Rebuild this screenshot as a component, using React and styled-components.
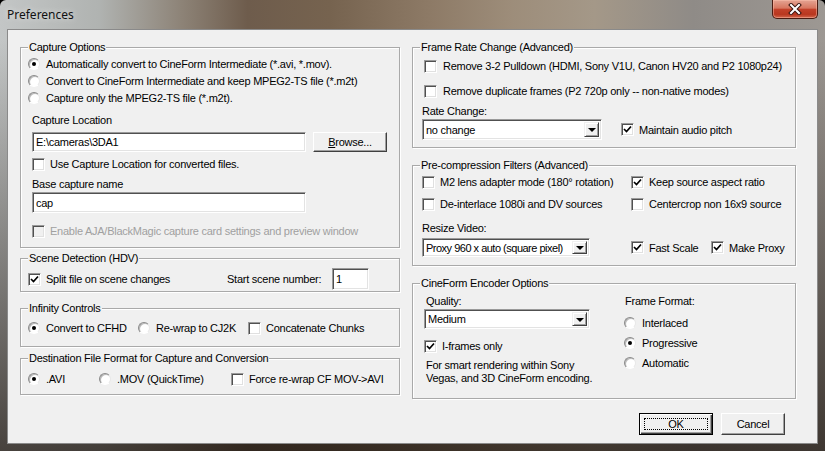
import styled, { createGlobalStyle } from "styled-components";

const GlobalStyle = createGlobalStyle`
  body {
    margin: 0;
    background: #000;
    font-family: "Liberation Sans", Arial, sans-serif;
    font-size: 11px;
    letter-spacing: -0.25px;
    color: #000;
  }
`;

const Window = styled.div`
  width: 825px;
  height: 451px;
  display: flex;
  flex-direction: column;
  box-sizing: border-box;
  border-radius: 6px 6px 0 0;
  overflow: hidden;
  background:
    linear-gradient(to bottom, rgba(0, 0, 0, 0) 0px, rgba(0, 0, 0, 0) 40px, rgba(30, 22, 16, 0.75) 100%),
    linear-gradient(to right, #c3c6c6 0%, #b0b3b1 12%, #8d8377 22%, #6e5c4c 30%, #76634f 40%, #8d7a66 52%, #9d8d7a 62%, #a49888 72%, #8f8b87 84%, #9d9893 100%);
`;

const TitleBar = styled.div`
  height: 29px;
  display: flex;
  align-items: flex-start;
  justify-content: space-between;
  padding: 0 7px 0 7px;
  flex-shrink: 0;
`;

const Title = styled.div`
  font-family: "Noto Sans", "Liberation Sans", sans-serif;
  font-size: 12px;
  letter-spacing: 0;
  line-height: 30px;
  color: #111;
  text-shadow: 0 0 6px rgba(255, 255, 255, 0.7);
`;

const CloseButton = styled.div`
  width: 46px;
  height: 19px;
  box-sizing: border-box;
  border: 1px solid #4a1c12;
  border-top: none;
  border-radius: 0 0 5px 5px;
  background: linear-gradient(to bottom, #e4a493 0%, #d77760 45%, #c2412a 52%, #b9371f 80%, #d2664c 100%);
  box-shadow: inset 0 0 0 1px rgba(255, 200, 180, 0.45);
  display: flex;
  align-items: center;
  justify-content: center;
`;

const Client = styled.div`
  flex: 1;
  margin: 0 7px 7px 7px;
  background: #f0f0f0;
  border: 1px solid #8a8a8a;
  display: flex;
  flex-direction: column;
  padding: 17px 21px 0 12px;
`;

const Columns = styled.div`
  display: grid;
  grid-template-columns: 380px 384px;
  column-gap: 12px;
  align-items: start;
`;

const Column = styled.div`
  display: flex;
  flex-direction: column;
`;

const Group = styled.div`
  position: relative;
  box-sizing: border-box;
  height: ${(p) => p.$h}px;
  margin-top: ${(p) => p.$mt || 0}px;
  border: 1px solid #a9a9a9;
  box-shadow: inset 1px 1px 0 #fff, 1px 1px 0 #fff;
  display: flex;
  flex-direction: column;
`;

const Legend = styled.span`
  position: absolute;
  top: -7px;
  left: 7px;
  padding: 0 1px;
  line-height: 13px;
  background: #f0f0f0;
  white-space: nowrap;
`;

const Row = styled.div`
  display: flex;
  align-items: center;
  height: ${(p) => p.$h || 16}px;
  margin-top: ${(p) => p.$mt || 0}px;
  padding-left: ${(p) => p.$pl || 0}px;
  white-space: nowrap;
`;

const GridRow = styled.div`
  display: grid;
  grid-template-columns: ${(p) => p.$cols};
  align-items: center;
  height: ${(p) => p.$h || 16}px;
  margin-top: ${(p) => p.$mt || 0}px;
  padding-left: ${(p) => p.$pl || 0}px;
  white-space: nowrap;
`;

const Option = styled.div`
  display: flex;
  align-items: center;
  gap: ${(p) => p.$gap || 5}px;
  color: ${(p) => (p.$disabled ? "#a0a0a0" : "#000")};
  margin-left: ${(p) => p.$ml || 0}px;
`;

const Box = styled.span`
  width: 13px;
  height: 13px;
  box-sizing: border-box;
  flex-shrink: 0;
  background: ${(p) => (p.$disabled ? "#f0f0f0" : "#fff")};
  border: 1px solid;
  border-color: #9a9a9a #fff #fff #9a9a9a;
  box-shadow: inset 1px 1px 0 #505050, inset -1px -1px 0 #e0e0e0;
  display: flex;
  align-items: center;
  justify-content: center;
`;

const Round = styled.span`
  width: 12px;
  height: 12px;
  box-sizing: border-box;
  flex-shrink: 0;
  border-radius: 50%;
  background: radial-gradient(circle at 60% 60%, #fff 0%, #fff 45%, #e6e6e6 100%);
  border: 1px solid;
  border-color: #8a8a8a #e8e8e8 #ffffff #8a8a8a;
  box-shadow: inset 1px 1px 0 #b8b8b8;
  display: flex;
  align-items: center;
  justify-content: center;
`;

const Dot = styled.span`
  width: 4px;
  height: 4px;
  border-radius: 50%;
  background: #000;
`;

const Label = styled.div`
  line-height: 13px;
  white-space: ${(p) => (p.$wrap ? "normal" : "nowrap")};
`;

const TextBox = styled.div`
  width: ${(p) => p.$w}px;
  height: ${(p) => p.$h || 20}px;
  box-sizing: border-box;
  background: #fff;
  border: 1px solid;
  border-color: #9a9a9a #fff #fff #9a9a9a;
  box-shadow: inset 1px 1px 0 #505050, inset -1px -1px 0 #e3e3e3;
  padding-left: 3px;
  display: flex;
  align-items: center;
  margin-left: ${(p) => p.$ml || 0}px;
  flex-shrink: 0;
  white-space: nowrap;
  overflow: hidden;
`;

const Combo = styled(TextBox)`
  justify-content: space-between;
  gap: 2px;
  padding: 2px 2px 2px 3px;
`;

const ComboText = styled.span`
  flex: 1;
  min-width: 0;
  overflow: hidden;
  letter-spacing: ${(p) => (p.$tight ? "-0.5px" : "inherit")};
`;

const DropButton = styled.span`
  width: 15px;
  height: 100%;
  box-sizing: border-box;
  flex-shrink: 0;
  background: #f0f0f0;
  border: 1px solid;
  border-color: #f0f0f0 #404040 #404040 #f0f0f0;
  box-shadow: inset 1px 1px 0 #fff, inset -1px -1px 0 #a0a0a0;
  display: flex;
  align-items: center;
  justify-content: center;
`;

const Arrow = styled.span`
  width: 0;
  height: 0;
  border-left: 4px solid transparent;
  border-right: 4px solid transparent;
  border-top: 4px solid #000;
  margin-top: 1px;
`;

const Button = styled.div`
  width: ${(p) => p.$w}px;
  height: ${(p) => p.$h || 21}px;
  box-sizing: border-box;
  background: #f0f0f0;
  border: 1px solid;
  border-color: ${(p) => (p.$default ? "#000" : "#fff #404040 #404040 #fff")};
  box-shadow: ${(p) =>
    p.$default
      ? "inset 1px 1px 0 #fff, inset -1px -1px 0 #404040, inset -2px -2px 0 #a0a0a0"
      : "inset -1px -1px 0 #a0a0a0"};
  display: flex;
  align-items: center;
  justify-content: center;
  margin-left: ${(p) => p.$ml || 0}px;
  flex-shrink: 0;
`;

const Focus = styled.span`
  border: 1px dotted #000;
  width: calc(100% - 8px);
  height: calc(100% - 8px);
  display: flex;
  align-items: center;
  justify-content: center;
  box-sizing: border-box;
`;

const SplitGrid = styled.div`
  display: grid;
  grid-template-columns: ${(p) => p.$cols};
  padding-left: ${(p) => p.$pl || 0}px;
`;

const SubColumn = styled.div`
  display: flex;
  flex-direction: column;
`;

const ButtonRow = styled.div`
  display: flex;
  justify-content: flex-end;
  padding-right: 11px;
  margin-top: 14px;
`;

const Check = ({ checked, disabled }) => (
  <Box $disabled={disabled}>
    {checked && (
      <svg width="9" height="9" viewBox="0 0 9 9">
        <path d="M1 4 L3.5 6.5 L8 1.5" fill="none" stroke="#000" strokeWidth="1.7" />
      </svg>
    )}
  </Box>
);

const Radio = ({ checked }) => <Round>{checked && <Dot />}</Round>;

const CheckOption = ({ checked, disabled, children, ml, gap }) => (
  <Option $disabled={disabled} $ml={ml} $gap={gap}>
    <Check checked={checked} disabled={disabled} />
    <span>{children}</span>
  </Option>
);

const RadioOption = ({ checked, children, ml }) => (
  <Option $gap={6} $ml={ml}>
    <Radio checked={checked} />
    <span>{children}</span>
  </Option>
);

const Select = ({ w, h, value, tight }) => (
  <Combo $w={w} $h={h}>
    <ComboText $tight={tight}>{value}</ComboText>
    <DropButton>
      <Arrow />
    </DropButton>
  </Combo>
);

export default function App() {
  return (
    <>
      <GlobalStyle />
      <Window>
        <TitleBar>
          <Title>Preferences</Title>
          <CloseButton>
            <svg width="14" height="12" viewBox="0 0 14 12">
              <path d="M3 2 L11 10 M11 2 L3 10" stroke="#3a1510" strokeWidth="4" strokeLinecap="square" />
              <path d="M3 2 L11 10 M11 2 L3 10" stroke="#fff" strokeWidth="2" strokeLinecap="square" />
            </svg>
          </CloseButton>
        </TitleBar>
        <Client>
          <Columns>
            <Column>
              <Group $h={201}>
                <Legend>Capture Options</Legend>
                <Row $mt={8} $pl={7}>
                  <RadioOption checked>Automatically convert to CineForm Intermediate (*.avi, *.mov).</RadioOption>
                </Row>
                <Row $mt={1} $pl={7}>
                  <RadioOption>Convert to CineForm Intermediate and keep MPEG2-TS file (*.m2t)</RadioOption>
                </Row>
                <Row $mt={1} $pl={7}>
                  <RadioOption>Capture only the MPEG2-TS file (*.m2t).</RadioOption>
                </Row>
                <Row $h={14} $mt={7} $pl={11}>
                  <Label>Capture Location</Label>
                </Row>
                <Row $h={20} $mt={5} $pl={11}>
                  <TextBox $w={274}>E:\cameras\3DA1</TextBox>
                  <Button $w={74} $h={20} $ml={7}>
                    <span>
                      <u>B</u>rowse...
                    </span>
                  </Button>
                </Row>
                <Row $mt={4} $pl={11}>
                  <CheckOption>Use Capture Location for converted files.</CheckOption>
                </Row>
                <Row $h={14} $mt={5} $pl={11}>
                  <Label>Base capture name</Label>
                </Row>
                <Row $h={21} $mt={1} $pl={11}>
                  <TextBox $w={274} $h={21}>cap</TextBox>
                </Row>
                <Row $mt={10} $pl={11}>
                  <CheckOption disabled>Enable AJA/BlackMagic capture card settings and preview window</CheckOption>
                </Row>
              </Group>

              <Group $h={34} $mt={10}>
                <Legend>Scene Detection (HDV)</Legend>
                <GridRow $cols="199px 105px 37px" $h={22} $mt={9} $pl={7}>
                  <CheckOption checked>Split file on scene changes</CheckOption>
                  <Label>Start scene number:</Label>
                  <TextBox $w={37} $h={22}>1</TextBox>
                </GridRow>
              </Group>

              <Group $h={39} $mt={16}>
                <Legend>Infinity Controls</Legend>
                <GridRow $cols="110px 110px auto" $mt={11} $pl={7}>
                  <RadioOption checked>Convert to CFHD</RadioOption>
                  <RadioOption>Re-wrap to CJ2K</RadioOption>
                  <CheckOption>Concatenate Chunks</CheckOption>
                </GridRow>
              </Group>

              <Group $h={37} $mt={11}>
                <Legend>Destination File Format for Capture and Conversion</Legend>
                <GridRow $cols="71px 132px auto" $mt={12} $pl={7}>
                  <RadioOption checked>.AVI</RadioOption>
                  <RadioOption>.MOV (QuickTime)</RadioOption>
                  <CheckOption>Force re-wrap CF MOV-&gt;AVI</CheckOption>
                </GridRow>
              </Group>
            </Column>

            <Column>
              <Group $h={101}>
                <Legend>Frame Rate Change (Advanced)</Legend>
                <Row $mt={10} $pl={11}>
                  <CheckOption gap={6}>Remove 3-2 Pulldown (HDMI, Sony V1U, Canon HV20 and P2 1080p24)</CheckOption>
                </Row>
                <Row $mt={9} $pl={11}>
                  <CheckOption gap={6}>Remove duplicate frames (P2 720p only -- non-native modes)</CheckOption>
                </Row>
                <Row $h={13} $mt={6} $pl={9}>
                  <Label>Rate Change:</Label>
                </Row>
                <GridRow $cols="199px auto" $h={21} $mt={1} $pl={9}>
                  <Select w={180} h={21} value="no change" />
                  <CheckOption checked>Maintain audio pitch</CheckOption>
                </GridRow>
              </Group>

              <Group $h={101} $mt={17}>
                <Legend>Pre-compression Filters (Advanced)</Legend>
                <GridRow $cols="209px auto" $mt={8} $pl={9}>
                  <CheckOption>M2 lens adapter mode (180° rotation)</CheckOption>
                  <CheckOption checked>Keep source aspect ratio</CheckOption>
                </GridRow>
                <GridRow $cols="209px auto" $mt={6} $pl={9}>
                  <CheckOption>De-interlace 1080i and DV sources</CheckOption>
                  <CheckOption>Centercrop non 16x9 source</CheckOption>
                </GridRow>
                <Row $h={14} $mt={9} $pl={9}>
                  <Label>Resize Video:</Label>
                </Row>
                <GridRow $cols="209px 80px auto" $h={19} $mt={3} $pl={9}>
                  <Select w={168} h={19} value="Proxy 960 x auto (square pixel)" tight />
                  <CheckOption checked>Fast Scale</CheckOption>
                  <CheckOption checked>Make Proxy</CheckOption>
                </GridRow>
              </Group>

              <Group $h={116} $mt={17}>
                <Legend>CineForm Encoder Options</Legend>
                <SplitGrid $cols="200px auto" $pl={11}>
                  <SubColumn>
                    <Row $h={14} $mt={10} $pl={2}>
                      <Label>Quality:</Label>
                    </Row>
                    <Row $h={20} $mt={1}>
                      <Select w={166} h={20} value="Medium" />
                    </Row>
                    <Row $mt={9}>
                      <CheckOption checked>I-frames only</CheckOption>
                    </Row>
                    <Row $h={28} $mt={4} $pl={2}>
                      <Label $wrap>
                        For smart rendering within Sony
                        <br />
                        Vegas, and 3D CineForm encoding.
                      </Label>
                    </Row>
                  </SubColumn>
                  <SubColumn>
                    <Row $h={14} $mt={10} $pl={1}>
                      <Label>Frame Format:</Label>
                    </Row>
                    <Row $mt={7}>
                      <RadioOption>Interlaced</RadioOption>
                    </Row>
                    <Row $mt={4}>
                      <RadioOption checked>Progressive</RadioOption>
                    </Row>
                    <Row $mt={4}>
                      <RadioOption>Automatic</RadioOption>
                    </Row>
                  </SubColumn>
                </SplitGrid>
              </Group>
            </Column>
          </Columns>
          <ButtonRow>
            <Button $w={74} $h={22} $default>
              <Focus>OK</Focus>
            </Button>
            <Button $w={64} $h={22} $ml={8}>
              Cancel
            </Button>
          </ButtonRow>
        </Client>
      </Window>
    </>
  );
}
